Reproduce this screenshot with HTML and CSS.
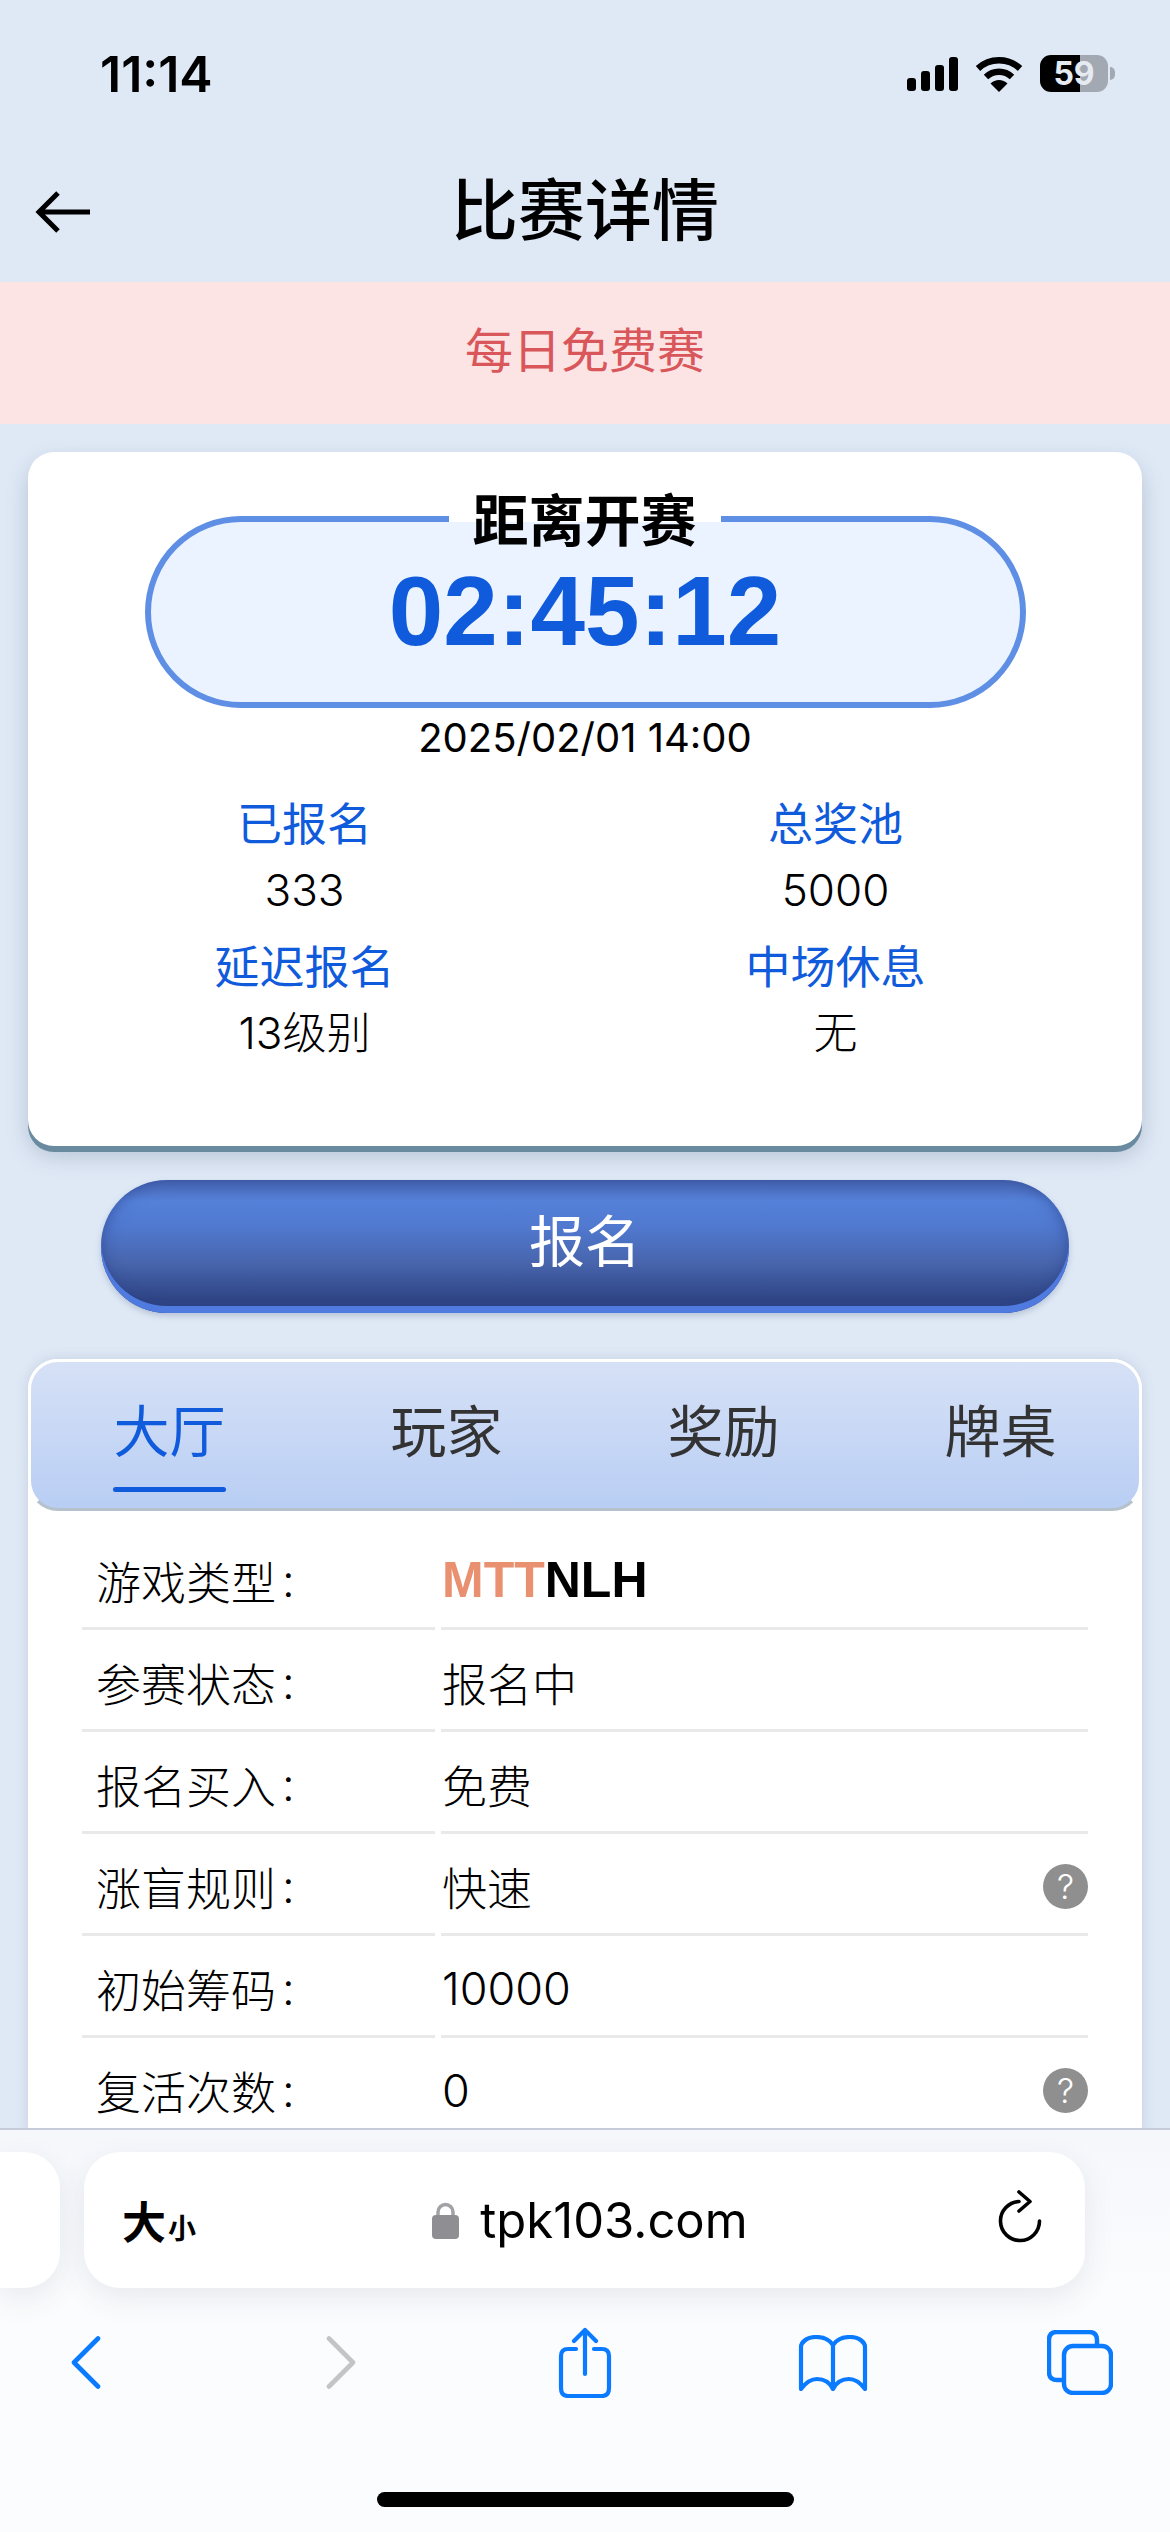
FILE: index.html
```html
<!DOCTYPE html>
<html lang="zh-CN">
<head>
    <meta charset="UTF-8">
    <meta name="viewport" content="width=device-width, initial-scale=1.0">
    <title>比赛详情</title>
    <link rel="stylesheet" href="styles.css">
</head>
<body>

    <div class="status-bar">
        <span class="clock">11:14</span>
        <div class="status-icons">
            <svg class="signal" width="51" height="34" viewBox="0 0 51 34">
                <rect x="0" y="21" width="9" height="13" rx="3"/>
                <rect x="14" y="14" width="9" height="20" rx="3"/>
                <rect x="28" y="8" width="9" height="26" rx="3"/>
                <rect x="42" y="0" width="9" height="34" rx="3"/>
            </svg>
            <svg class="wifi" width="48" height="36" viewBox="0 0 48 36">
                <path d="M3 12.5 A31 31 0 0 1 45 12.5" fill="none" stroke="#000" stroke-width="6.5"/>
                <path d="M11 21 A19 19 0 0 1 37 21" fill="none" stroke="#000" stroke-width="6.5"/>
                <path d="M24 36 L15.5 27.5 A12 12 0 0 1 32.5 27.5 Z"/>
            </svg>
            <div class="battery">59</div>
        </div>
    </div>

    <div class="nav-bar">
        <svg class="back-arrow" width="57" height="44" viewBox="0 0 57 44">
            <path d="M55 22 H5 M23 3 L4 22 L23 41" fill="none" stroke="#000" stroke-width="5"/>
        </svg>
        <h1>比赛详情</h1>
    </div>

    <div class="banner">每日免费赛</div>

    <div class="content">
        <div class="info-card">
            <div class="countdown">
                <div class="countdown-label">距离开赛</div>
                <div class="countdown-time">02:45:12</div>
            </div>
            <div class="start-date">2025/02/01 14:00</div>
            <div class="stats">
                <div class="stat"><div class="stat-name">已报名</div><div class="stat-value">333</div></div>
                <div class="stat"><div class="stat-name">总奖池</div><div class="stat-value">5000</div></div>
                <div class="stat"><div class="stat-name">延迟报名</div><div class="stat-value">13级别</div></div>
                <div class="stat"><div class="stat-name">中场休息</div><div class="stat-value">无</div></div>
            </div>
        </div>

        <button class="signup-btn">报名</button>

        <div class="detail-panel">
            <div class="tabs">
                <div class="tab active">大厅</div>
                <div class="tab">玩家</div>
                <div class="tab">奖励</div>
                <div class="tab">牌桌</div>
            </div>
            <div class="rows">
                <div class="row">
                    <div class="row-label">游戏类型<i>:</i></div>
                    <div class="row-value game-type"><span><b>MTT</b>NLH</span></div>
                </div>
                <div class="row">
                    <div class="row-label">参赛状态<i>:</i></div>
                    <div class="row-value"><span>报名中</span></div>
                </div>
                <div class="row">
                    <div class="row-label">报名买入<i>:</i></div>
                    <div class="row-value"><span>免费</span></div>
                </div>
                <div class="row">
                    <div class="row-label">涨盲规则<i>:</i></div>
                    <div class="row-value"><span>快速</span><span class="help">?</span></div>
                </div>
                <div class="row">
                    <div class="row-label">初始筹码<i>:</i></div>
                    <div class="row-value"><span>10000</span></div>
                </div>
                <div class="row">
                    <div class="row-label">复活次数<i>:</i></div>
                    <div class="row-value"><span>0</span><span class="help">?</span></div>
                </div>
            </div>
        </div>
    </div>

    <!-- safari toolbar sits on top of the page -->
    <div class="browser-bar">
        <div class="url-row">
            <div class="url-prev"></div>
            <div class="url-pill">
                <span class="text-size"><b>大</b><small>小</small></span>
                <span class="address">
                    <svg width="27" height="38" viewBox="0 0 27 38">
                        <path d="M6 17 V11 a7.5 7.5 0 0 1 15 0 V17" fill="none" stroke="#a2a2a6" stroke-width="3.5"/>
                        <rect x="0" y="14" width="27" height="24" rx="4" fill="#8e8e93"/>
                    </svg>
                    tpk103.com
                </span>
                <svg class="reload" width="44" height="53" viewBox="0 0 44 53">
                    <path d="M21 11.5 A19.5 19.5 0 1 0 41.5 31" fill="none" stroke="#000" stroke-width="3.6" stroke-linecap="round"/>
                    <path d="M21 2 L32 11.5 L21 21" fill="none" stroke="#000" stroke-width="3.6" stroke-linecap="round" stroke-linejoin="round"/>
                </svg>
            </div>
        </div>
        <div class="toolbar">
            <div class="tool">
                <svg width="30" height="53" viewBox="0 0 30 53"><path d="M27 2.5 L3 26.5 L27 50.5" fill="none" stroke="#0a7aff" stroke-width="4.6" stroke-linecap="round" stroke-linejoin="round"/></svg>
            </div>
            <div class="tool">
                <svg width="30" height="53" viewBox="0 0 30 53"><path d="M3 2.5 L27 26.5 L3 50.5" fill="none" stroke="#c4c4c7" stroke-width="4.6" stroke-linecap="round" stroke-linejoin="round"/></svg>
            </div>
            <div class="tool">
                <svg width="54" height="71" viewBox="0 0 54 71">
                    <path d="M18 22 H10 Q3 22 3 29 V61 Q3 69 10 69 H44 Q51 69 51 61 V29 Q51 22 44 22 H36 M27 47 V3 M16 14 L27 3 L38 14" fill="none" stroke="#0a7aff" stroke-width="4.2" stroke-linecap="round" stroke-linejoin="round"/>
                </svg>
            </div>
            <div class="tool">
                <svg width="70" height="56" viewBox="0 0 70 56">
                    <path d="M35 10 C31 4 24 2 18 2 C8 2 3 8 3 12 V54 C9 46 14 44 19 44 C26 44 32 48 35 54 C38 48 44 44 51 44 C56 44 61 46 67 54 V12 C67 8 62 2 52 2 C46 2 39 4 35 10 Z M35 10 V54" fill="none" stroke="#0a7aff" stroke-width="4.2" stroke-linejoin="round"/>
                </svg>
            </div>
            <div class="tool">
                <svg width="66" height="65" viewBox="0 0 66 65">
                    <path d="M50 14 V10 Q50 2 42 2 H10 Q2 2 2 10 V42 Q2 50 10 50 H15" fill="none" stroke="#0a7aff" stroke-width="4.4"/>
                    <rect x="17" y="16" width="47" height="47" rx="9" fill="none" stroke="#0a7aff" stroke-width="4.4"/>
                </svg>
            </div>
        </div>
        <div class="home-indicator"></div>
    </div>

</body>
</html>
```

FILE: styles.css
```css
* {
    box-sizing: border-box;
    margin: 0;
    padding: 0;
    font-family: Inter, "Noto Sans CJK SC", sans-serif;
}

body {
    position: relative;
    width: 1170px;
    height: 2532px;
    overflow: hidden;
    background: #dfe9f6;
    color: #000;
}

/* status bar */
.status-bar {
    display: flex;
    justify-content: space-between;
    align-items: flex-start;
    height: 150px;
    padding: 55px 55px 0 100px;
}

.clock {
    font-size: 50px;
    font-weight: 600;
    line-height: 38px;
}

.status-icons {
    display: flex;
    align-items: center;
    gap: 17px;
}

.battery {
    position: relative;
    width: 68px;
    height: 37px;
    margin-right: 7px;
    border-radius: 11px;
    background: linear-gradient(to right, #000 59%, #a3a9b3 59%);
    color: #e6ebf2;
    font-size: 32px;
    font-weight: 700;
    line-height: 37px;
    text-align: center;
}

.battery::after {
    content: "";
    position: absolute;
    right: -7px;
    top: 12px;
    width: 5px;
    height: 13px;
    border-radius: 0 5px 5px 0;
    background: #a3a9b3;
}

/* nav */
.nav-bar {
    position: relative;
    height: 132px;
    text-align: center;
}

.back-arrow {
    position: absolute;
    left: 35px;
    top: 40px;
}

.nav-bar h1 {
    font-size: 67px;
    font-weight: 500;
    line-height: 122px;
}

.banner {
    height: 142px;
    background: #fde4e4;
    color: #d9565a;
    font-size: 48px;
    line-height: 138px;
    text-align: center;
}

.content {
    padding: 28px 28px 0;
}

/* top card */
.info-card {
    height: 694px;
    padding-top: 64px;
    border-radius: 26px;
    background: white;
    box-shadow: 0 6px 0 #6a8aa0, 0 10px 22px rgba(40, 60, 90, 0.22);
}

.countdown {
    position: relative;
    width: 881px;
    height: 192px;
    margin: 0 auto;
    border: 6px solid #5f8fe4;
    border-radius: 96px;
    background: #eaf3ff;
    text-align: center;
}

.countdown-label {
    position: absolute;
    left: 298px;
    top: -36px;
    width: 272px;
    height: 68px;
    background: linear-gradient(white 36px, transparent 36px);
    font-size: 56px;
    font-weight: 700;
    line-height: 70px;
}

.countdown-time {
    padding-top: 34px;
    color: #0f5bdc;
    font-family: "Liberation Sans", sans-serif;
    font-size: 98px;
    font-weight: 700;
    line-height: 110px;
}

.start-date {
    margin-top: 6px;
    font-size: 40px;
    line-height: 48px;
    text-align: center;
}

.stats {
    display: grid;
    grid-template-columns: 531px 531px;
    justify-content: center;
    margin-top: 33px;
    padding-right: 30px;
}

.stat {
    height: 143px;
    text-align: center;
}

.stat-name {
    color: #0f5bdc;
    font-size: 45px;
    line-height: 60px;
}

.stat-value {
    margin-top: 5px;
    font-size: 44px;
    font-weight: 300;
    line-height: 60px;
}

/* signup button */
.signup-btn {
    display: block;
    width: 968px;
    height: 133px;
    margin: 34px auto 0;
    padding-bottom: 10px;
    border: none;
    border-radius: 66px;
    background: linear-gradient(#4a6ab8 0, #4f74c6 8%, #5581da 16%, #5079cf 35%, #4865ad 62%, #2f4585 90%);
    box-shadow: inset 0 -7px 0 #4f7be0, inset 0 0 16px rgba(30, 50, 120, 0.55), 0 3px 6px rgba(60, 80, 120, 0.25);
    color: white;
    font-size: 56px;
    line-height: 120px;
}

/* detail panel */
.detail-panel {
    height: 800px;
    margin-top: 46px;
    border-radius: 30px;
    background: white;
    box-shadow: 0 0 14px rgba(40, 60, 90, 0.14);
}

.tabs {
    display: grid;
    grid-template-columns: repeat(4, 277px);
    justify-content: center;
    height: 152px;
    border: 3px solid white;
    border-bottom: 3px solid #b5c2cc;
    border-radius: 30px;
    background: linear-gradient(#d6e1f6, #b9cef4);
}

.tab {
    position: relative;
    padding-top: 4px;
    color: #333;
    font-size: 56px;
    line-height: 132px;
    text-align: center;
}

.tab.active {
    color: #0f5bdc;
}

.tab.active::after {
    content: "";
    position: absolute;
    left: 82px;
    bottom: 16px;
    width: 113px;
    height: 5px;
    border-radius: 3px;
    background: #0f5bdc;
}

.rows {
    padding: 17px 54px 0;
}

.row {
    display: grid;
    grid-template-columns: 353px 647px;
    gap: 6px;
    height: 102px;
}

.row-label,
.row-value {
    display: flex;
    align-items: center;
    padding-top: 5px;
    border-bottom: 3px solid #e9e9e9;
    font-size: 45px;
    font-weight: 300;
}

.row-label {
    padding-left: 14px;
}

.row-label i {
    margin-left: 6px;
    font-style: normal;
}

.row-value {
    justify-content: space-between;
    padding-left: 1px;
}

.game-type span,
.game-type b {
    font-family: "Liberation Sans", sans-serif;
    font-size: 50px;
    font-weight: 700;
}

.game-type b {
    color: #e8906f;
}

.row-value .help {
    width: 45px;
    height: 45px;
    border-radius: 50%;
    background: #8f8f8f;
    color: white;
    font-size: 34px;
    font-weight: 300;
    line-height: 45px;
    text-align: center;
}

/* browser chrome */
.browser-bar {
    position: absolute;
    left: 0;
    bottom: 0;
    display: flex;
    flex-direction: column;
    width: 1170px;
    height: 404px;
    border-top: 2px solid #c5cbd8;
    background: linear-gradient(#f5f7fb, #fbfcfe 40%);
}

.url-row {
    display: flex;
    gap: 24px;
    padding-top: 22px;
}

.url-prev {
    width: 60px;
    height: 136px;
    border-radius: 0 36px 36px 0;
    background: white;
    box-shadow: 0 10px 30px rgba(60, 70, 90, 0.1);
}

.url-pill {
    display: flex;
    justify-content: space-between;
    align-items: center;
    width: 1001px;
    height: 136px;
    padding: 0 43px 0 38px;
    border-radius: 36px;
    background: white;
    box-shadow: 0 10px 30px rgba(60, 70, 90, 0.1);
}

.reload {
    margin-bottom: 8px;
}

.text-size b {
    font-size: 44px;
    font-weight: 700;
}

.text-size small {
    margin-left: 2px;
    font-size: 28px;
    font-weight: 700;
}

.address {
    display: flex;
    align-items: center;
    gap: 21px;
    margin-left: -14px;
    font-size: 49px;
}

.toolbar {
    display: grid;
    grid-template-columns: 255px 244px 248px 247px 70px;
    align-items: center;
    height: 71px;
    margin-top: 39px;
    padding-left: 51px;
}

.tool {
    display: flex;
    justify-content: center;
    width: 70px;
}

.home-indicator {
    width: 417px;
    height: 15px;
    margin: 94px auto 0;
    border-radius: 8px;
    background: #000;
}
```
